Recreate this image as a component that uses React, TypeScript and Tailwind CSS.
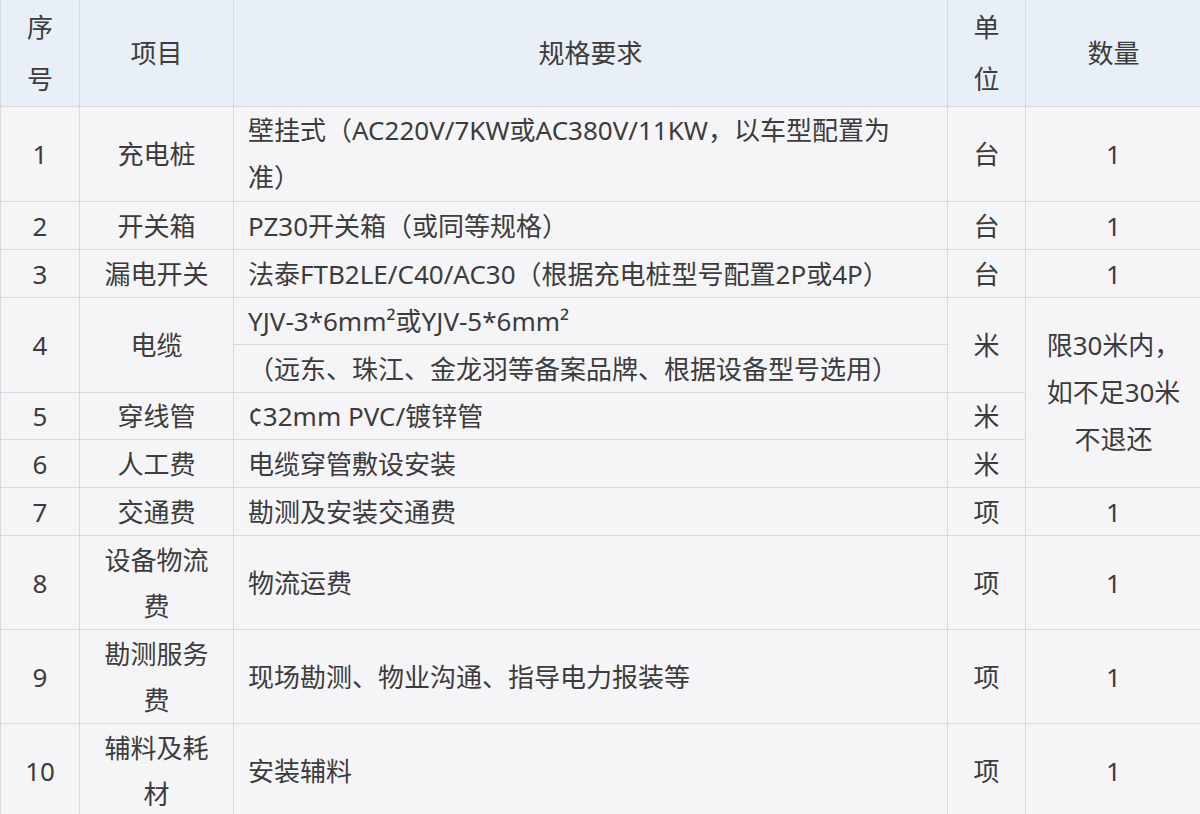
import React from "react";

const font = {
  fontFamily: '"Noto Sans", "Noto Sans CJK SC", sans-serif',
};

const cell = "border border-[#d8d9dc] text-center align-middle";
const spec = "border border-[#d8d9dc] text-left align-middle pl-[14px] pr-3";

const App = () => {
  return (
    <div
      className="w-[1200px] h-[814px] overflow-hidden bg-[#f5f5f7] text-[#3c3c3c] text-[26px] leading-[46px]"
      style={font}
    >
      <table className="w-[1201px] table-fixed border-collapse -mt-px">
        <colgroup>
          <col className="w-[79px]" />
          <col className="w-[154px]" />
          <col className="w-[714px]" />
          <col className="w-[78px]" />
          <col className="w-[176px]" />
        </colgroup>
        <thead>
          <tr className="h-[107px] bg-[#e9eff7]">
            <th className={`${cell} font-normal leading-[52px]`}>
              序<br />号
            </th>
            <th className={`${cell} font-normal`}>项目</th>
            <th className={`${cell} font-normal`}>规格要求</th>
            <th className={`${cell} font-normal leading-[52px]`}>
              单<br />位
            </th>
            <th className={`${cell} font-normal`}>数量</th>
          </tr>
        </thead>
        <tbody>
          <tr className="h-[94px]">
            <td className={cell}>1</td>
            <td className={cell}>充电桩</td>
            <td className={`${spec} leading-[47px] pr-[40px]`}>
              壁挂式（AC220V/7KW或AC380V/11KW，以车型配置为准）
            </td>
            <td className={cell}>台</td>
            <td className={cell}>1</td>
          </tr>
          <tr className="h-[48px]">
            <td className={cell}>2</td>
            <td className={cell}>开关箱</td>
            <td className={spec}>PZ30开关箱（或同等规格）</td>
            <td className={cell}>台</td>
            <td className={cell}>1</td>
          </tr>
          <tr className="h-[48px]">
            <td className={cell}>3</td>
            <td className={cell}>漏电开关</td>
            <td className={spec}>
              法泰FTB2LE/C40/AC30（根据充电桩型号配置2P或4P）
            </td>
            <td className={cell}>台</td>
            <td className={cell}>1</td>
          </tr>
          <tr className="h-[47px]">
            <td className={cell} rowSpan={2}>
              4
            </td>
            <td className={cell} rowSpan={2}>
              电缆
            </td>
            <td className={spec}>YJV-3*6mm²或YJV-5*6mm²</td>
            <td className={cell} rowSpan={2}>
              米
            </td>
            <td className={`${cell} leading-[47px]`} rowSpan={4}>
              限30米内，
              <br />
              如不足30米
              <br />
              不退还
            </td>
          </tr>
          <tr className="h-[48px]">
            <td className={spec}>（远东、珠江、金龙羽等备案品牌、根据设备型号选用）</td>
          </tr>
          <tr className="h-[47px]">
            <td className={cell}>5</td>
            <td className={cell}>穿线管</td>
            <td className={spec}>¢32mm PVC/镀锌管</td>
            <td className={cell}>米</td>
          </tr>
          <tr className="h-[48px]">
            <td className={cell}>6</td>
            <td className={cell}>人工费</td>
            <td className={spec}>电缆穿管敷设安装</td>
            <td className={cell}>米</td>
          </tr>
          <tr className="h-[48px]">
            <td className={cell}>7</td>
            <td className={cell}>交通费</td>
            <td className={spec}>勘测及安装交通费</td>
            <td className={cell}>项</td>
            <td className={cell}>1</td>
          </tr>
          <tr className="h-[94px]">
            <td className={cell}>8</td>
            <td className={`${cell} px-5`}>设备物流费</td>
            <td className={spec}>物流运费</td>
            <td className={cell}>项</td>
            <td className={cell}>1</td>
          </tr>
          <tr className="h-[94px]">
            <td className={cell}>9</td>
            <td className={`${cell} px-5`}>勘测服务费</td>
            <td className={spec}>现场勘测、物业沟通、指导电力报装等</td>
            <td className={cell}>项</td>
            <td className={cell}>1</td>
          </tr>
          <tr className="h-[94px]">
            <td className={cell}>10</td>
            <td className={`${cell} px-5`}>辅料及耗材</td>
            <td className={spec}>安装辅料</td>
            <td className={cell}>项</td>
            <td className={cell}>1</td>
          </tr>
        </tbody>
      </table>
    </div>
  );
};

export default App;
